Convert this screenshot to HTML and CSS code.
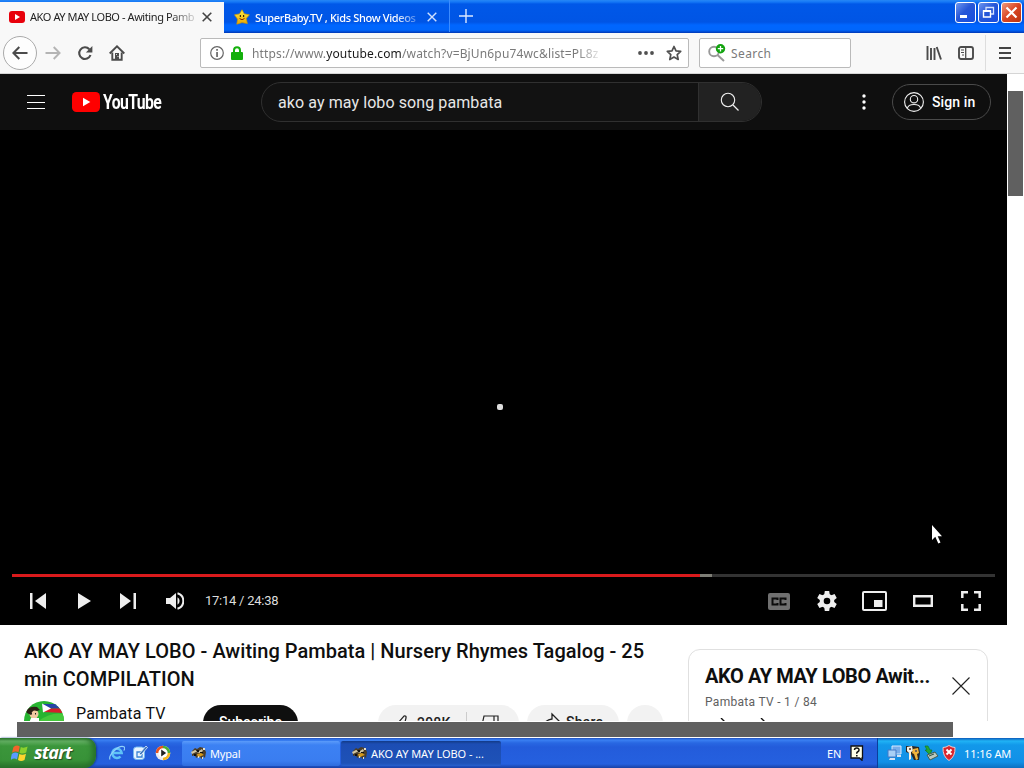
FILE: index.html
```html
<!DOCTYPE html>
<html lang="en">
<head>
<meta charset="utf-8">
<title>AKO AY MAY LOBO - Awiting Pambata</title>
<link rel="stylesheet" href="styles.css">
</head>
<body>
<svg class="defs" width="0" height="0" aria-hidden="true">
  <defs>
    <linearGradient id="gold" x2="0" y2="1"><stop offset="0" stop-color="#fff04a"/><stop offset="1" stop-color="#e9a400"/></linearGradient>
    <symbol id="raccoon" viewBox="0 0 16 16">
      <path d="M1 6l3-3 2 1 3-2 4 1 2 4-1 6-2-2-1 3-3-3-3 2-1-3-3 1z" fill="#4b3d28"/>
      <path d="M0 7l4-2 4 1 3-2 1 2-3 2-4-1-4 2z" fill="#cfc4a2"/>
      <path d="M6 9l4-1 3 2-3 1-3 2z" fill="#d59a1c"/>
      <path d="M5 5h3v2H6zM9 7h3v1H9zM3 9h2v2H3z" fill="#111"/>
      <path d="M12 3h2v2h-2zM7 11h1v2H7zM11 12h1v2h-1z" fill="#e8e0c8"/>
    </symbol>
  </defs>
</svg>
<div class="screen">
  <header class="titlebar">
    <div class="tab tab-active">
      <svg class="fav" width="16" height="12" viewBox="0 0 16 12"><rect width="16" height="12" rx="3" fill="#e8000b"/><path d="M6 3v6l5-3z" fill="#fff"/></svg>
      <span class="tab-text">AKO AY MAY LOBO - Awiting Pamb</span>
      <svg class="tab-close" width="10" height="10" viewBox="0 0 10 10"><path d="M.7.7l8.6 8.6M9.3.7L.7 9.3" stroke="#444" stroke-width="1.6"/></svg>
    </div>
    <div class="tab tab-idle">
      <svg class="fav" width="16" height="16" viewBox="0 0 16 16"><path d="M8 .8l2.200 4 5.200 1-3.200 3.800 1.200 5-5.400-1-5.200 1.600.8-5L.5 5.800l5-.9z" fill="url(#gold)" stroke="#d09a00" stroke-width=".7"/><path d="M6.400 6v2M9.600 6v2" stroke="#3a2a00" stroke-width="1.200"/><path d="M5.500 9.500q2.500 2.500 5 0" fill="none" stroke="#8a2a00"/></svg>
      <span class="tab-text">SuperBaby.TV , Kids Show Videos</span>
      <svg class="tab-close" width="10" height="10" viewBox="0 0 10 10"><path d="M.7.7l8.6 8.6M9.3.7L.7 9.3" stroke="#cfe1ff" stroke-width="1.4"/></svg>
    </div>
    <svg class="new-tab" width="14" height="14" viewBox="0 0 14 14"><path d="M7 0v14M0 7h14" stroke="#dce9ff" stroke-width="1.4"/></svg>
    <div class="win-buttons">
      <span class="win-btn"><svg width="19" height="19" viewBox="0 0 19 19"><path d="M4 12h7v3H4z" fill="#fff"/></svg></span>
      <span class="win-btn"><svg width="19" height="19" viewBox="0 0 19 19"><path d="M7 7V4.500h7.500V11H12" fill="none" stroke="#d4e2ff" stroke-width="1.300"/><path d="M4.500 8h7v6h-7z" fill="none" stroke="#fff" stroke-width="1.400"/><path d="M4 8h8" stroke="#fff" stroke-width="2"/></svg></span>
      <span class="win-btn win-x"><svg width="19" height="19" viewBox="0 0 19 19"><path d="M4.500 4.500l10 10M14.500 4.500l-10 10" stroke="#fff" stroke-width="2.200"/></svg></span>
    </div>
  </header>

  <nav class="toolbar">
    <span class="back"><svg width="16" height="14" viewBox="0 0 16 14"><path d="M15.500 7H1.500M7.300 1L1.400 7l5.900 6" fill="none" stroke="#4b4b4b" stroke-width="2"/></svg></span>
    <svg class="fwd" width="16" height="14" viewBox="0 0 16 14"><path d="M.5 7h14M8.700 1l5.900 6-5.900 6" fill="none" stroke="#b4b4b4" stroke-width="1.900"/></svg>
    <svg class="reload" width="16" height="16" viewBox="0 0 16 16"><path d="M12.300 4.200A5.800 5.800 0 1 0 13.500 10" fill="none" stroke="#4b4b4b" stroke-width="2.100"/><path d="M15.400 1v6.500H8.900z" fill="#4b4b4b"/></svg>
    <svg class="home" width="16" height="16" viewBox="0 0 16 16"><path d="M.7 8.500L8 1.300l7.300 7.200" fill="none" stroke="#4b4b4b" stroke-width="1.900"/><path d="M3.300 7.500v7.300h9.400V7.500" fill="none" stroke="#4b4b4b" stroke-width="1.900"/><path d="M6 8h4v7H6z" fill="#4b4b4b"/><path d="M7 9h1v1H7zM8.500 11h1v1h-1z" fill="#ddd"/></svg>
    <div class="urlbar">
      <svg width="14" height="14" viewBox="0 0 14 14"><circle cx="7" cy="7" r="6.300" fill="none" stroke="#666" stroke-width="1.200"/><path d="M6.200 3h1.700v1.700H6.200zM6.200 6h1.700v5H6.200z" fill="#666"/></svg>
      <svg class="lock" width="12" height="14" viewBox="0 0 12 14"><path d="M3 7V4.200a3 3 0 0 1 6 0V7" fill="none" stroke="#14b00c" stroke-width="2"/><rect y="6" width="12" height="8" rx="1" fill="#14b00c"/></svg>
      <span class="url">https://www.<b>youtube.com</b>/watch?v=BjUn6pu74wc&amp;list=PL8z</span>
      <svg class="dots" width="16" height="4" viewBox="0 0 16 4"><g fill="#505050"><circle cx="2" cy="2" r="1.900"/><circle cx="8" cy="2" r="1.900"/><circle cx="14" cy="2" r="1.900"/></g></svg>
      <svg class="star" width="16" height="16" viewBox="0 0 16 16"><path d="M8 1.500l2 4.400 4.700.5-3.500 3.300 1 4.800L8 12.100l-4.200 2.400 1-4.800-3.500-3.300 4.700-.5z" fill="none" stroke="#505050" stroke-width="1.700" stroke-linejoin="round"/></svg>
    </div>
    <div class="searchbar">
      <svg width="18" height="18" viewBox="0 0 18 18"><circle cx="6" cy="7.500" r="4.800" fill="none" stroke="#999" stroke-width="1.900"/><path d="M9.500 11l6.500 6" stroke="#999" stroke-width="2"/><circle cx="12.500" cy="4.700" r="4.700" fill="#12a30f"/><path d="M12.500 2v5.400M9.800 4.700h5.400" stroke="#fff" stroke-width="1.300"/></svg>
      <span>Search</span>
    </div>
    <svg class="library" width="16" height="14" viewBox="0 0 16 14"><path d="M1.500 0v14M5 2v12M8.500 2v12M10.700 1l4.300 12.500" stroke="#4b4b4b" stroke-width="1.900"/></svg>
    <svg class="sidebar-ic" width="16" height="14" viewBox="0 0 16 14"><rect x="1" y="1" width="14" height="12" rx="2" fill="none" stroke="#4b4b4b" stroke-width="1.900"/><path d="M7.700 1v12" stroke="#4b4b4b" stroke-width="1.300"/><path d="M3 4h3M3 6.500h3M4 9h2" stroke="#4b4b4b"/></svg>
    <span class="tool-sep"></span>
    <svg class="menu" width="12" height="12" viewBox="0 0 12 12"><path d="M0 1h12M0 6h12M0 11h12" stroke="#444" stroke-width="2"/></svg>
  </nav>

  <div class="viewport">
    <div class="page">
      <div class="masthead">
        <svg class="guide" width="18" height="14" viewBox="0 0 18 14"><path d="M0 .5h18M0 7.500h18M0 13.500h18" stroke="#fff"/></svg>
        <svg class="yt-mark" width="28" height="20" viewBox="0 0 28 20"><rect width="28" height="20" rx="4.500" fill="#f00"/><path d="M11 5.700v8.600l7.300-4.300z" fill="#fff"/></svg>
        <span class="yt-word">YouTube</span>
        <div class="yt-search">
          <span class="query">ako ay may lobo song pambata</span>
          <span class="go"><svg width="20" height="20" viewBox="0 0 20 20"><circle cx="8" cy="8" r="6.700" fill="none" stroke="#eee" stroke-width="1.100"/><path d="M13 13l5.500 5.500" stroke="#eee" stroke-width="1.200"/></svg></span>
        </div>
        <svg class="kebab" width="4" height="16" viewBox="0 0 4 16"><g fill="#fff"><circle cx="2" cy="2" r="1.700"/><circle cx="2" cy="8" r="1.700"/><circle cx="2" cy="14" r="1.700"/></g></svg>
        <div class="signin">
          <svg width="20" height="20" viewBox="0 0 20 20" fill="none" stroke="#f1f1f1" stroke-width="1.100"><circle cx="10" cy="10" r="9.400"/><circle cx="10" cy="7.200" r="3.700"/><path d="M3.300 16.300c1.200-5.100 12.200-5.100 13.400 0"/></svg>
          <span>Sign in</span>
        </div>
      </div>

      <div class="player">
        <div class="stage">
          <span class="speck"></span>
          <svg class="pointer" width="10" height="19" viewBox="0 0 10 19"><path d="M0 0v15l3.300-3.200L6.300 18.500l2.200-1-2.800-6.300H10z" fill="#fff"/></svg>
        </div>
        <div class="progress"><span class="played"></span><span class="loaded"></span></div>
        <div class="controls">
          <svg class="prev" width="16" height="16" viewBox="0 0 16 16" fill="#eee"><path d="M0 0h2.500v16H0zM16 0v16L5 8z"/></svg>
          <svg class="play" width="13" height="16" viewBox="0 0 13 16"><path d="M0 0l13 8-13 8z" fill="#eee"/></svg>
          <svg class="next" width="16" height="16" viewBox="0 0 16 16" fill="#eee"><path d="M13.500 0H16v16h-2.500zM0 0l11 8-11 8z"/></svg>
          <svg class="volume" width="18" height="18" viewBox="0 0 18 18"><path d="M0 6h4l6-5v16l-6-5H0z" fill="#eee"/><path d="M11.500 5.200a4.500 4.500 0 0 1 0 7.600z" fill="#eee"/><path d="M11.500 1.300a8 8 0 0 1 0 15.400" fill="none" stroke="#eee" stroke-width="2"/></svg>
          <span class="time">17:14 / 24:38</span>
          <svg class="cc" width="22" height="17" viewBox="0 0 22 17"><rect width="22" height="17" rx="2" fill="#707070"/><path d="M9.500 7V5.500h-5v6h5V10M17.500 7V5.500h-5v6h5V10" fill="none" stroke="#0b0b0b" stroke-width="2"/></svg>
          <svg class="gear" width="20" height="20" viewBox="0 0 20 20"><g fill="#eee"><path d="M7.800 0h4.400l.6 4H7.200zM7.800 20h4.400l.6-4H7.200z"/><path d="M7.800 0h4.400l.6 4H7.200zM7.800 20h4.400l.6-4H7.200z" transform="rotate(60 10 10)"/><path d="M7.800 0h4.400l.6 4H7.200zM7.800 20h4.400l.6-4H7.200z" transform="rotate(120 10 10)"/></g><circle cx="10" cy="10" r="5.300" fill="none" stroke="#eee" stroke-width="4"/></svg>
          <svg class="mini" width="25" height="20" viewBox="0 0 25 20"><rect x="1" y="1" width="23" height="18" rx="1" fill="none" stroke="#eee" stroke-width="2"/><path d="M12 9h8.500v7H12z" fill="#eee"/></svg>
          <svg class="theater" width="20" height="12" viewBox="0 0 20 12"><path d="M1.200 1.200h17.600v9.600H1.200z" fill="none" stroke="#eee" stroke-width="2.400"/></svg>
          <svg class="full" width="20" height="20" viewBox="0 0 20 20"><path d="M1.300 7V1.300H7M13 1.300h5.700V7M18.700 13v5.700H13M7 18.700H1.300V13" fill="none" stroke="#eee" stroke-width="2.500"/></svg>
        </div>
      </div>

      <div class="below">
        <main class="primary">
          <h1><span>AKO AY MAY LOBO - Awiting Pambata | Nursery Rhymes Tagalog - 25</span><br><span>min COMPILATION</span></h1>
          <div class="meta">
            <svg class="avatar" width="40" height="40" viewBox="0 0 40 40"><defs><clipPath id="disc"><circle cx="20" cy="20" r="20"/></clipPath></defs><g clip-path="url(#disc)"><path d="M0 0h40v40H0z" fill="#27b431"/><path d="M12 22q14-12 28-9v12H12z" fill="#45c83b"/><path d="M18 3l20 0v4.500H19z" fill="#2743a6"/><path d="M20 7.500h19V12l-19-1z" fill="#d51d2c"/><path d="M18 2.500l9 5-8 4z" fill="#fff"/><circle cx="10" cy="13" r="4.500" fill="#f1c9a0"/><path d="M2 10q3-5 11-4l3 3-3 1q-5-2-6 4l-4-2z" fill="#2b2015"/><path d="M7 12h1v1.500H7zM11 12h1v1.500h-1z" fill="#222"/><path d="M7 17h8v5H5z" fill="#fff"/></g></svg>
            <span class="channel">Pambata TV</span>
            <span class="subscribe">Subscribe</span>
            <div class="likes">
              <svg width="20" height="20" viewBox="0 0 20 20" fill="none" stroke="#222" stroke-width="1.200"><path d="M3 10h4l6-7q2.500-.5 2 2l-1 4h5l-1 10H3z"/></svg>
              <span>298K</span>
              <i></i>
              <svg width="20" height="20" viewBox="0 0 20 20" fill="none" stroke="#222" stroke-width="1.200"><path d="M14 3h4v10h-4zM14 3H4L2 12h5l-1 5 2 2 6-7z"/></svg>
            </div>
            <div class="share">
              <svg width="20" height="20" viewBox="0 0 20 20" fill="none" stroke="#222" stroke-width="1.300"><path d="M11 2l7 7-7 7v-4q-7 0-10 5 2-9 10-10z"/></svg>
              <span>Share</span>
            </div>
            <span class="more"></span>
          </div>
        </main>
        <aside class="playlist">
          <div class="pl-head">
            <div class="pl-text"><h2>AKO AY MAY LOBO Awit...</h2><p>Pambata TV - 1 / 84</p></div>
            <svg width="18" height="18" viewBox="0 0 18 18"><path d="M.5.5l17 17M17.500.5l-17 17" stroke="#222" stroke-width="1.100"/></svg>
          </div>
          <svg class="pl-tools" width="60" height="20" viewBox="0 0 60 20" fill="none" stroke="#111" stroke-width="1.400"><path d="M16 0l4 4-4 4M3 5h16M42 5h6l10 10M56 0l4 4"/></svg>
        </aside>
      </div>
    </div>
    <div class="vscroll"><span></span></div>
  </div>
  <div class="hscroll"><span></span></div>

  <footer class="taskbar">
    <div class="start">
      <svg width="18" height="18" viewBox="0 0 18 18"><path d="M2.500 3Q6 .5 8.800 2.500L7.500 8.300Q4.500 6.500 1 8.800z" fill="#f2642a"/><path d="M9.800 3q3 1.500 6.800-.5L15.200 8.500q-3.500 2-6.700.2z" fill="#8bd02d"/><path d="M.8 10q3.500-2.500 6.500-.5L6 15.500Q3 13.500-.5 16z" fill="#5a9bff"/><path d="M8.300 10q3.200 1.800 6.700-.3L13.500 16q-3.500 2-6.500 0z" fill="#ffd52e"/></svg>
      <span>start</span>
    </div>
    <div class="quick">
      <svg width="16" height="16" viewBox="0 0 16 16"><path d="M3.500 8h9.200A4.700 4.700 0 1 0 11.500 11.500" fill="none" stroke="#5fc3f7" stroke-width="2.500"/><path d="M1 14.500C-1 10 10-1 15.300 2c.8 1 .2 2.500-.6 3.500" fill="none" stroke="#8fd0fa" stroke-width="1.200"/></svg>
      <svg width="16" height="16" viewBox="0 0 16 16"><rect x="1.500" y="2" width="11" height="12.500" rx="3" fill="#e8f4ff" stroke="#75b9f0"/><path d="M10 7H5v5h5V9" fill="none" stroke="#3b84d4" stroke-width="1.300"/><path d="M7 9l7-8 1.500 1.500L9 10z" fill="#3672bd" stroke="#fff" stroke-width=".7"/></svg>
      <svg width="16" height="16" viewBox="0 0 16 16"><circle cx="8" cy="8" r="7.300" fill="#e9e9ee"/><path d="M8 .7A7.300 7.300 0 0 0 .7 8H4a4 4 0 0 1 4-4z" fill="#e65320"/><path d="M8 .7A7.300 7.300 0 0 1 15.300 8H12a4 4 0 0 0-4-4z" fill="#4aaf36"/><path d="M15.300 8A7.300 7.300 0 0 1 8 15.300V12a4 4 0 0 0 4-4z" fill="#f5b51d"/><circle cx="8" cy="8" r="4.700" fill="#fff"/><path d="M6.200 4.500v7l5-3.500z" fill="#222"/></svg>
    </div>
    <div class="task task-a"><svg width="16" height="16"><use href="#raccoon"/></svg><span>Mypal</span></div>
    <div class="task task-b"><svg width="16" height="16"><use href="#raccoon"/></svg><span>AKO AY MAY LOBO - ...</span></div>
    <div class="lang"><span>EN</span>
      <svg width="14" height="16" viewBox="0 0 14 16"><path d="M1 1h11.500v12H12v2.300L9.500 13H1z" fill="#ffffe8" stroke="#111" stroke-width="1.300"/><path d="M4.500 5q0-2 2.300-2T9 5q0 1.200-1.200 1.700T6.700 8.800" fill="none" stroke="#111" stroke-width="1.500"/><path d="M6 10h1.600v1.500H6z" fill="#111"/></svg>
    </div>
    <div class="tray">
      <svg width="15" height="16" viewBox="0 0 15 16"><path d="M5 1h9v8H5z" fill="#78aeea" stroke="#d7e9ff"/><path d="M1 5h8v7H1z" fill="#a8d0f6" stroke="#4579c6"/><path d="M3 13h5v2H2zM10 10h4v2h-4z" fill="#d5e3f5"/></svg>
      <svg width="16" height="16" viewBox="0 0 16 16"><path d="M1 1h6l7 1 1 6-1 7H9l-3-6-5-2z" fill="#2b2723"/><path d="M2 2l5-1 1 5-2 1v7l-2 1V8L2 6z" fill="#f4f0e4"/><path d="M8 4l5-1 1 5-2 1 1 5-2 1-2-6-2-1z" fill="#f0b43c"/><path d="M4 3h2v2H4zM10 5h2v2h-2z" fill="#765"/></svg>
      <svg width="15" height="16" viewBox="0 0 15 16"><path d="M1 1l2 4H1l5 5 2-5H6L4 1z" fill="#24a832" stroke="#116f1f" stroke-width=".6"/><path d="M3 10l8-3 3 4-8 4z" fill="#bcc9bd" stroke="#445e50"/><path d="M5 11l5-2" stroke="#2a5040"/></svg>
      <svg width="14" height="16" viewBox="0 0 14 16"><path d="M1 2.500q3 0 6-2 3 2 6 2 .5 9-6 13-6.500-4-6-13z" fill="#d9252e" stroke="#f1c6c6"/><path d="M4.500 4.500l5 5M9.500 4.500l-5 5" stroke="#fff" stroke-width="1.900"/></svg>
      <span>11:16 AM</span>
    </div>
  </footer>
</div>
</body>
</html>
```

FILE: styles.css
```css
* { box-sizing: border-box; }
body { margin: 0; }
svg { display: block; flex: none; }
.defs { position: absolute; }
.screen { width: 1024px; height: 768px; overflow: hidden; display: flex; flex-direction: column; background: #fff; font-family: "Noto Sans", "Open Sans", sans-serif; }
span { white-space: nowrap; }

/* Window title and tabs */
.titlebar { flex: none; height: 33px; display: flex; background: linear-gradient(#2687f5 0, #1477f6 2px, #0058e8 4px, #0055e5 22px, #0066ff 25px, #0066fc 30px, #0037b5 33px); }
.tab { height: 32px; display: flex; align-items: center; font-size: 11px; }
.tab-active { margin-top: 2px; height: 31px; width: 224px; padding: 0 0 2px 9px; background: #f8f8f8; color: #222; letter-spacing: -.42px; }
.tab-idle { width: 226px; padding: 2px 0 0 10px; color: #fff; border-right: 1px solid #3c8cff; font-weight: 500; letter-spacing: -.34px; }
.tab-text { width: 166px; margin-left: 5px; overflow: hidden; mask-image: linear-gradient(90deg, #000 140px, transparent 170px); }
.tab-idle .tab-text { width: 161px; }
.tab-close { margin-left: 6px; }
.tab-idle .tab-close { margin-left: 11px; }
.new-tab { margin: 9px 0 0 9px; }
.win-buttons { margin: 2px 2px 0 auto; display: flex; gap: 2px; }
.win-btn { width: 21px; height: 21px; border: 1px solid #fff; border-radius: 3px; background: linear-gradient(135deg, #6d96f0, #2757d7 45%, #164ee0); }
.win-x { background: linear-gradient(135deg, #f09a7e, #d94523 50%, #ba3410); }

/* Navigation toolbar */
.toolbar { flex: none; height: 41px; display: flex; align-items: center; background: #f8f8f8; border-bottom: 1px solid #d5d5d5; }
.back { width: 34px; height: 34px; margin-left: 3px; border: 1px solid #aaa; border-radius: 50%; background: #fdfdfd; display: flex; align-items: center; justify-content: center; }
.fwd { margin-left: 8px; }
.reload { margin-left: 16px; }
.home { margin-left: 16px; }
.urlbar, .searchbar { height: 30px; border: 1px solid #bababa; border-radius: 2px; background: #fff; display: flex; align-items: center; color: #7a7a7a; }
.urlbar { margin-left: 75px; width: 489px; padding-left: 9px; font-size: 12px; }
.lock { margin-left: 7px; margin-top: -1px; }
.url { width: 349px; margin-left: 9px; overflow: hidden; mask-image: linear-gradient(90deg, #000 325px, transparent 352px); letter-spacing: .15px; }
.url b { font-weight: 400; color: #1a1a1a; }
.dots { margin-left: 37px; }
.star { margin-left: 12px; }
.searchbar { margin-left: 10px; width: 152px; padding-left: 8px; font-size: 12px; }
.searchbar span { margin-left: 5px; letter-spacing: .4px; }
.library { margin-left: 75px; }
.sidebar-ic { margin-left: 16px; }
.tool-sep { width: 1px; height: 36px; margin-left: 11px; background: #ddd; }
.menu { margin-left: 13px; }

/* Web page */
.viewport { flex: none; height: 647px; display: flex; overflow: hidden; font-family: Roboto, sans-serif; }
.page { width: 1007px; height: 647px; overflow: hidden; }
.masthead { height: 56px; background: #0f0f0f; display: flex; align-items: center; color: #fff; }
.guide { margin-left: 27px; }
.yt-mark { margin-left: 27px; }
.yt-word { margin-left: 3px; width: 96px; font-size: 21px; font-weight: 700; letter-spacing: -.8px; transform: scaleX(.75); transform-origin: left; }
.yt-search { margin-left: 62px; width: 501px; height: 40px; border: 1px solid #303030; border-radius: 20px; display: flex; overflow: hidden; background: #121212; }
.query { width: 436px; padding-left: 16px; line-height: 40px; font-size: 16px; color: #e7e7e7; letter-spacing: .09px; }
.go { flex: 1; background: #222; border-left: 1px solid #303030; display: flex; align-items: center; padding-left: 21px; }
.kebab { margin-left: 100px; }
.signin { width: 99px; height: 36px; margin-left: 26px; border: 1px solid #4a4a4a; border-radius: 18px; display: flex; align-items: center; padding-left: 11px; font-size: 14px; font-weight: 500; }
.signin span { margin-left: 8px; letter-spacing: .1px; }

.player { height: 495px; background: #000; }
.stage { height: 444px; position: relative; }
.speck { position: absolute; left: 497px; top: 274px; width: 6px; height: 6px; background: #ddd; border-radius: 2px; }
.pointer { position: absolute; left: 932px; top: 395px; }
.progress { height: 3px; margin: 0 12px; background: #333; display: flex; }
.played { width: 688px; background: #d91a1c; }
.loaded { width: 12px; background: #7e7e76; }
.controls { height: 48px; display: flex; align-items: center; color: #ddd; }
.prev { margin-left: 30px; }
.play { margin-left: 32px; }
.next { margin-left: 29px; }
.volume { margin-left: 30px; }
.time { width: 90px; margin-left: 21px; margin-top: -1px; font-size: 13px; letter-spacing: -.25px; }
.cc { margin-left: 473px; }
.gear { margin-left: 27px; }
.mini { margin-left: 25px; }
.theater { margin-left: 26px; }
.full { margin-left: 28px; }

.below { display: flex; align-items: flex-start; height: 96px; overflow: hidden; }
.primary { width: 664px; flex: none; margin-left: 24px; padding-top: 12px; color: #0f0f0f; }
h1, h2, p { margin: 0; }
h1 { font-size: 20px; line-height: 28px; font-weight: 500; letter-spacing: .035px; }
.meta { display: flex; align-items: flex-start; padding-top: 8px; }
.channel { width: 128px; margin-left: 12px; font-size: 16px; line-height: 26px; letter-spacing: .18px; }
.subscribe, .likes, .share, .more { height: 36px; margin-top: 4px; border-radius: 18px; font-size: 14px; font-weight: 500; line-height: 34px; }
.subscribe { width: 95px; margin-left: -1px; text-align: center; background: #0f0f0f; color: #fff; letter-spacing: .05px; }
.likes, .share, .more { background: #f2f2f2; color: #222; }
.likes { width: 141px; margin-left: 80px; display: flex; align-items: center; padding-left: 13px; }
.likes span { margin-left: 6px; width: 49px; line-height: 32px; letter-spacing: .2px; }
.likes i { width: 1px; height: 22px; background: #ccc; }
.likes svg:last-child { margin-left: 13px; }
.share { width: 92px; margin-left: 8px; display: flex; padding: 7px 0 0 14px; }
.share span { margin-left: 5px; line-height: 20px; letter-spacing: .2px; }
.more { width: 36px; margin-left: 8px; }
.playlist { width: 300px; height: 120px; margin-top: 24px; border: 1px solid #e0e0e0; border-radius: 12px; padding-left: 16px; }
.pl-head { display: flex; padding-top: 12px; }
.pl-text { width: 247px; flex: none; }
.pl-head > svg { margin-top: 15px; }
h2 { font-size: 20px; line-height: 28px; font-weight: 700; letter-spacing: -.4px; color: #0f0f0f; white-space: nowrap; }
.playlist p { font-size: 12px; line-height: 24px; color: #606060; letter-spacing: .3px; }
.pl-tools { margin-top: 4px; }

.vscroll { width: 17px; padding: 17px 0 0 1px; background: #fff; }
.vscroll span { display: block; width: 15px; height: 105px; background: #606060; }
.hscroll { flex: none; height: 17px; padding: 1px 0 0 17px; background: #fff; }
.hscroll span { display: block; width: 936px; height: 15px; background: #606060; }

/* Taskbar */
.taskbar { flex: none; height: 30px; display: flex; align-items: center; color: #fff; font-size: 11px; background: linear-gradient(#1f50c0 0, #3a80f2 2px, #2867e2 5px, #235cdb 9px, #2560df 26px, #1941a5 30px); }
.start { width: 96px; height: 30px; padding-left: 11px; border-radius: 0 10px 12px 0; display: flex; align-items: center; background: linear-gradient(#2c752c, #65b165 3px, #3b963b 8px, #389238 22px, #28702a 30px); box-shadow: inset -4px 0 5px #28722b, 1px 0 2px #163d91; }
.start span { margin-left: 5px; margin-top: -2px; font: italic 700 18px "Open Sans", sans-serif; letter-spacing: -.8px; text-shadow: 1px 1px 1px #224c22; }
.quick { width: 86px; padding-left: 13px; display: flex; gap: 7px; }
.task { height: 25px; border-radius: 2px; display: flex; align-items: center; padding-left: 9px; }
.task span { margin-left: 3px; letter-spacing: -.2px; }
.task-a { width: 158px; background: linear-gradient(#5b9bfa, #3c81f3 4px, #3a7df0 20px, #2f6cdd); }
.task-b { width: 160px; margin-left: 1px; padding-left: 11px; background: linear-gradient(#123a86, #1c4db4 3px, #1e52b7 22px, #2760cd); }
.task-b span { letter-spacing: -.05px; }
.lang { width: 50px; margin-left: auto; display: flex; align-items: center; gap: 9px; }
.tray { width: 147px; height: 30px; border-left: 1px solid #0a3f9c; display: flex; align-items: center; gap: 3px; padding-left: 9px; background: linear-gradient(#0c59b9, #20b3f5 3px, #1298ea 7px, #1190e7 24px, #0d6fc0 30px); }
.tray span { margin-left: 5px; white-space: nowrap; letter-spacing: -.1px; }
```
